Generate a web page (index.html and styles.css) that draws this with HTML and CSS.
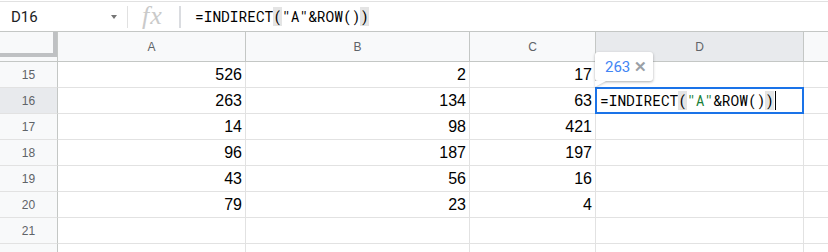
FILE: index.html
```html
<!DOCTYPE html>
<html lang="en">
<head>
    <meta charset="UTF-8">
    <title>Sheet - INDIRECT</title>
    <link rel="stylesheet" href="styles.css">
</head>
<body>
    <!-- formula bar -->
    <div class="formula-bar">
        <div class="name-box">
            <span>D16</span>
            <span class="caret"></span>
        </div>
        <div class="fx">fx</div>
        <div class="formula-text">=INDIRECT<span class="paren">(</span>"A"&amp;ROW()<span class="paren">)</span></div>
    </div>

    <!-- grid -->
    <div class="sheet">
        <div class="grid">
            <div class="corner"><div class="freeze"></div></div>
            <div class="col-head">A</div>
            <div class="col-head">B</div>
            <div class="col-head">C</div>
            <div class="col-head active">D</div>
            <div class="col-head last"></div>

            <div class="row-head">15</div>
            <div class="cell">526</div><div class="cell">2</div><div class="cell">17</div><div class="cell"></div><div class="cell last"></div>

            <div class="row-head active">16</div>
            <div class="cell">263</div><div class="cell">134</div><div class="cell">63</div><div class="cell"></div><div class="cell last"></div>

            <div class="row-head">17</div>
            <div class="cell">14</div><div class="cell">98</div><div class="cell">421</div><div class="cell"></div><div class="cell last"></div>

            <div class="row-head">18</div>
            <div class="cell">96</div><div class="cell">187</div><div class="cell">197</div><div class="cell"></div><div class="cell last"></div>

            <div class="row-head">19</div>
            <div class="cell">43</div><div class="cell">56</div><div class="cell">16</div><div class="cell"></div><div class="cell last"></div>

            <div class="row-head">20</div>
            <div class="cell">79</div><div class="cell">23</div><div class="cell">4</div><div class="cell"></div><div class="cell last"></div>

            <div class="row-head">21</div>
            <div class="cell"></div><div class="cell"></div><div class="cell"></div><div class="cell"></div><div class="cell last"></div>

            <div class="row-head">22</div>
            <div class="cell"></div><div class="cell"></div><div class="cell"></div><div class="cell"></div><div class="cell last"></div>
        </div>

        <!-- value preview tooltip -->
        <div class="preview">
            <span class="preview-value">263</span>
            <span class="preview-close">&#x2715;</span>
        </div>

        <!-- in-cell editor -->
        <div class="editor">=INDIRECT<span class="paren">(</span><span class="str">"A"</span>&amp;ROW()<span class="paren">)</span><span class="cursor"></span></div>
    </div>
</body>
</html>
```

FILE: styles.css
```css
/* base */
body {
    margin: 0;
    background: #fff;
    font-family: 'Liberation Sans', Arial, sans-serif;
    overflow: hidden;
}

/* formula bar */
.formula-bar {
    margin-top: 1px;
    height: 31px;
    box-sizing: border-box;
    border-top: 1px solid #e1e1e1;
    border-bottom: 1px solid #c4c7c5;
    display: flex;
    align-items: center;
}

.name-box {
    width: 128px;
    height: 22px;
    box-sizing: border-box;
    padding: 0 10px 0 11px;
    border-right: 1px solid #e1e1e1;
    display: flex;
    align-items: center;
    justify-content: space-between;
    font-family: Roboto, sans-serif;
    font-size: 15px;
    color: #202124;
}

.caret {
    width: 0;
    height: 0;
    border-left: 3px solid transparent;
    border-right: 3px solid transparent;
    border-top: 4px solid #757575;
}

.fx {
    width: 53px;
    height: 22px;
    box-sizing: border-box;
    padding-left: 14px;
    border-right: 2px solid #dadce0;
    font-family: 'Liberation Serif', serif;
    font-style: italic;
    font-size: 26px;
    line-height: 20px;
    color: #cacaca;
    letter-spacing: 1px;
}

.formula-text {
    padding-left: 14px;
    font-family: 'Roboto Mono', 'DejaVu Sans Mono', 'Liberation Mono', monospace;
    font-size: 14.5px;
    color: #000;
    line-height: 17px;
}

.paren {
    background: #e4e4e4;
}

/* grid */
.sheet {
    position: relative;
}

.grid {
    display: grid;
    grid-template-columns: 58px 188px 224px 126px 208px 1fr;
    grid-auto-rows: 26px;
    grid-template-rows: 30px;
}

.corner {
    background: #f8f9fa;
    border-right: 1px solid #c4c7c5;
    border-bottom: 1px solid #c4c7c5;
}

.freeze {
    width: 57px;
    height: 25px;
    box-sizing: border-box;
    border-right: 4px solid #bfc1c3;
    border-bottom: 4px solid #bfc1c3;
}

.col-head {
    background: #f8f9fa;
    border-right: 1px solid #c4c7c5;
    border-bottom: 1px solid #c4c7c5;
    display: flex;
    align-items: center;
    justify-content: center;
    font-size: 12px;
    color: #5f6368;
}

.col-head.active,
.row-head.active {
    background: #e8eaed;
}

.col-head.last,
.cell.last {
    border-right: none;
}

.row-head {
    background: #f8f9fa;
    border-right: 1px solid #c4c7c5;
    border-bottom: 1px solid #e2e2e2;
    display: flex;
    align-items: center;
    justify-content: center;
    font-size: 12px;
    color: #5f6368;
}

.cell {
    border-right: 1px solid #e2e2e2;
    border-bottom: 1px solid #e2e2e2;
    padding-right: 3px;
    display: flex;
    align-items: center;
    justify-content: flex-end;
    font-size: 16px;
    color: #000;
}

/* tooltip */
.preview {
    position: absolute;
    left: 595px;
    top: 20px;
    width: 58px;
    height: 29px;
    box-sizing: border-box;
    padding-left: 10px;
    background: #fff;
    border-radius: 3px;
    box-shadow: 0 1px 3px rgba(60,64,67,0.3), 0 1px 2px rgba(60,64,67,0.15);
    display: flex;
    align-items: center;
    gap: 4px;
    font-family: Roboto, sans-serif;
    z-index: 2;
}

.preview::after {
    content: '';
    position: absolute;
    left: 0;
    bottom: -6px;
    width: 0;
    height: 0;
    border-top: 6px solid #fff;
    border-right: 11px solid transparent;
    filter: drop-shadow(0 1px 1px rgba(60,64,67,0.25));
}

.preview-value {
    font-size: 15px;
    color: #4285f4;
}

.preview-close {
    font-size: 15px;
    font-weight: bold;
    color: #9aa0a6;
}

/* editor */
.editor {
    position: absolute;
    left: 595px;
    top: 55px;
    width: 209px;
    height: 27px;
    box-sizing: border-box;
    border: 2px solid #1a73e8;
    background: #fff;
    padding-left: 3px;
    display: flex;
    align-items: center;
    font-family: 'Roboto Mono', 'DejaVu Sans Mono', 'Liberation Mono', monospace;
    font-size: 14.5px;
    color: #000;
    white-space: pre;
    z-index: 1;
}

.editor .str {
    color: #188038;
}

.cursor {
    width: 1px;
    height: 19px;
    margin-left: 1px;
    background: #000;
}
```
